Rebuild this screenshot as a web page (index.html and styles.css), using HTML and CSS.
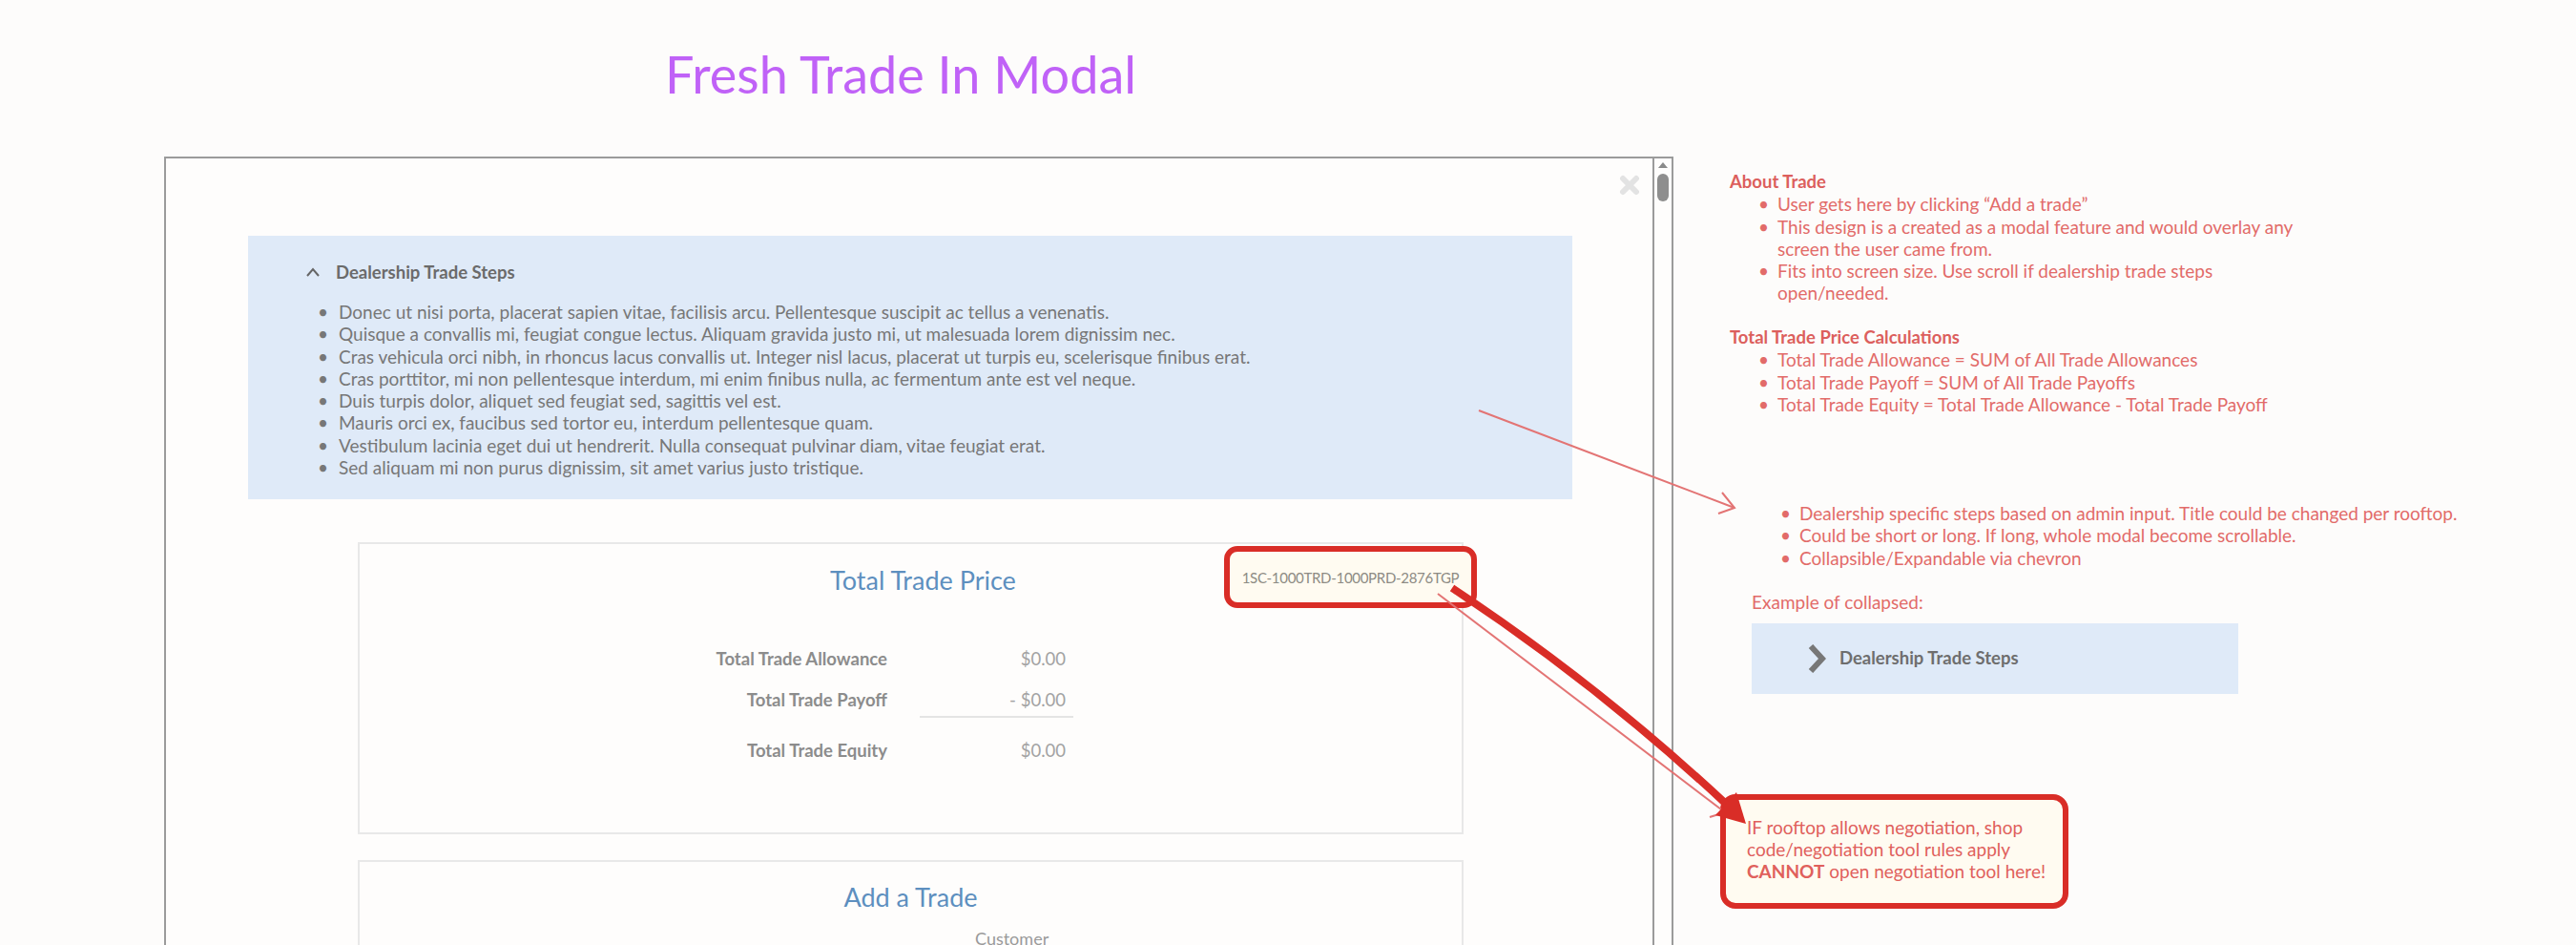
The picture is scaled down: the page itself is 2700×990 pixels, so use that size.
FILE: index.html
```html
<!DOCTYPE html>
<html lang="en">
<head>
    <meta charset="UTF-8">
    <meta name="viewport" content="width=device-width, initial-scale=1.0">
    <title>Fresh Trade In Modal</title>
    <link rel="stylesheet" href="styles.css">
</head>
<body>
    <div class="board">
        <div class="screen">
            <h1 class="board-title">Fresh Trade In Modal</h1>

            <div class="modal">
                <svg class="close" width="22" height="22" viewBox="0 0 22 22">
                    <path d="M4 4 L18 18 M18 4 L4 18" stroke="#e3e3e3" stroke-width="6" stroke-linecap="round"/>
                </svg>

                <div class="modal-body">
                    <div class="steps">
                        <div class="steps-head">
                            <svg width="16" height="10" viewBox="0 0 16 10">
                                <path d="M2 9 L8 2 L14 9" fill="none" stroke="#666" stroke-width="2"/>
                            </svg>
                            <span>Dealership Trade Steps</span>
                        </div>
                        <ul class="steps-list">
                            <li>Donec ut nisi porta, placerat sapien vitae, facilisis arcu. Pellentesque suscipit ac tellus a venenatis.</li>
                            <li>Quisque a convallis mi, feugiat congue lectus. Aliquam gravida justo mi, ut malesuada lorem dignissim nec.</li>
                            <li>Cras vehicula orci nibh, in rhoncus lacus convallis ut. Integer nisl lacus, placerat ut turpis eu, scelerisque finibus erat.</li>
                            <li>Cras porttitor, mi non pellentesque interdum, mi enim finibus nulla, ac fermentum ante est vel neque.</li>
                            <li>Duis turpis dolor, aliquet sed feugiat sed, sagittis vel est.</li>
                            <li>Mauris orci ex, faucibus sed tortor eu, interdum pellentesque quam.</li>
                            <li>Vestibulum lacinia eget dui ut hendrerit. Nulla consequat pulvinar diam, vitae feugiat erat.</li>
                            <li>Sed aliquam mi non purus dignissim, sit amet varius justo tristique.</li>
                        </ul>
                    </div>

                    <div class="card price-card">
                        <div class="code-tag">1SC-1000TRD-1000PRD-2876TGP</div>
                        <h2 class="card-title">Total Trade Price</h2>
                        <div class="totals">
                            <div class="total-label">Total Trade Allowance</div>
                            <div class="total-value">$0.00</div>
                            <div class="total-label">Total Trade Payoff</div>
                            <div class="total-value subtotal">- $0.00</div>
                            <div class="total-label equity">Total Trade Equity</div>
                            <div class="total-value equity">$0.00</div>
                        </div>
                    </div>

                    <div class="card add-card">
                        <h2 class="card-title">Add a Trade</h2>
                        <div class="field-label">Customer</div>
                    </div>
                </div>

                <div class="modal-scroll">
                    <span class="scroll-up"></span>
                    <span class="scroll-thumb"></span>
                </div>
            </div>
        </div>

        <div class="notes">
            <div class="note-block">
                <div class="note-title">About Trade</div>
                <ul class="note-list">
                    <li>User gets here by clicking “Add a trade”</li>
                    <li>This design is a created as a modal feature and would overlay any<br>screen the user came from.</li>
                    <li>Fits into screen size. Use scroll if dealership trade steps<br>open/needed.</li>
                </ul>

                <div class="note-title spaced">Total Trade Price Calculations</div>
                <ul class="note-list">
                    <li>Total Trade Allowance = SUM of All Trade Allowances</li>
                    <li>Total Trade Payoff = SUM of All Trade Payoffs</li>
                    <li>Total Trade Equity = Total Trade Allowance - Total Trade Payoff</li>
                </ul>
            </div>

            <ul class="note-list steps-notes">
                <li>Dealership specific steps based on admin input. Title could be changed per rooftop.</li>
                <li>Could be short or long. If long, whole modal become scrollable.</li>
                <li>Collapsible/Expandable via chevron</li>
            </ul>

            <div class="collapsed-label">Example of collapsed:</div>
            <div class="collapsed">
                <svg width="19" height="30" viewBox="0 0 19 30">
                    <path d="M3 2 L15 15 L3 28" fill="none" stroke="#777" stroke-width="6"/>
                </svg>
                <span>Dealership Trade Steps</span>
            </div>

            <div class="callout">
                IF rooftop allows negotiation, shop<br>
                code/negotiation tool rules apply<br>
                <b>CANNOT</b> open negotiation tool here!
            </div>
        </div>
    </div>

    <!-- annotation arrows -->
    <svg class="arrows" width="2700" height="990" viewBox="0 0 2700 990">
        <g stroke="#e37474" stroke-width="2" fill="none">
            <path d="M1550 430 L1818 532"/>
            <path d="M1805 516 L1818 532 L1801 538"/>
            <path d="M1507 622 L1808 851"/>
            <path d="M1792 856 L1808 851"/>
        </g>
        <path d="M1522 616 Q1675 717 1810 843" stroke="#d92d27" stroke-width="8" fill="none"/>
        <path d="M1830 863 L1798 854 L1820 830 Z" fill="#d92d27"/>
    </svg>
</body>
</html>
```

FILE: styles.css
```css
* {
    margin: 0;
    padding: 0;
    box-sizing: border-box;
}

body {
    background: #fdfcfb;
    font-family: Lato, "Open Sans", sans-serif;
    width: 2700px;
    height: 990px;
    overflow: hidden;
    position: relative;
}

.board {
    display: flex;
    padding-left: 172px;
}

.screen {
    width: 1582px;
    flex-shrink: 0;
}

.board-title {
    height: 164px;
    padding: 46px 0 0 525px;
    font-size: 54px;
    line-height: 64px;
    font-weight: 400;
    color: #c062f7;
}

/* modal frame with its own scroll gutter */
.modal {
    position: relative;
    display: flex;
    height: 900px;
    border: 2px solid #9b9b9b;
    border-bottom: none;
    background: #fefdfc;
}

.close {
    position: absolute;
    top: 17px;
    right: 33px;
}

.modal-body {
    flex: 1;
    padding: 81px 84px 0 86px;
}

.modal-scroll {
    width: 20px;
    border-left: 2px solid #9b9b9b;
    display: flex;
    flex-direction: column;
    align-items: center;
    padding-top: 4px;
}

.scroll-up {
    width: 0;
    height: 0;
    border-left: 5px solid transparent;
    border-right: 5px solid transparent;
    border-bottom: 6px solid #8a8a8a;
}

.scroll-thumb {
    width: 12px;
    height: 29px;
    margin-top: 6px;
    border-radius: 6px;
    background: #8e8e8e;
}

/* dealership steps panel */
.steps {
    background: #dfeaf8;
    padding: 26px 40px 22px 60px;
}

.steps-head {
    display: flex;
    align-items: center;
    gap: 16px;
    font-size: 18.5px;
    line-height: 24px;
    font-weight: 700;
    color: #6b6b6b;
}

.steps-list {
    list-style: none;
    margin-top: 18px;
    padding-left: 13px;
    font-size: 19px;
    line-height: 23.3px;
    color: #777;
}

.steps-list li {
    display: flex;
}

.steps-list li::before {
    content: "•";
    width: 22px;
    flex-shrink: 0;
}

/* cards */
.card {
    border: 2px solid #e8e8e8;
    background: #fefdfc;
    margin: 0 114px 0 115px;
}

.card-title {
    text-align: center;
    font-size: 27px;
    line-height: 34px;
    font-weight: 400;
    color: #5d8fbf;
}

.price-card {
    position: relative;
    margin-top: 45px;
    padding: 21px 0 74px;
}

.price-card .card-title {
    text-indent: 26px;
}

.code-tag {
    position: absolute;
    top: 2px;
    right: -16px;
    width: 265px;
    height: 65px;
    border: 6px solid #d92d27;
    border-radius: 14px;
    background: #fffbf1;
    display: flex;
    align-items: center;
    justify-content: center;
    font-size: 15px;
    letter-spacing: -0.3px;
    color: #8d8b84;
}

.totals {
    display: grid;
    grid-template-columns: 300px 161px;
    column-gap: 34px;
    row-gap: 19px;
    margin: 53px 0 0 253px;
    font-size: 18.5px;
    line-height: 24px;
}

.total-label {
    text-align: right;
    font-weight: 700;
    color: #8c8c8c;
}

.total-value {
    text-align: right;
    padding-right: 8px;
    color: #a3a3a3;
}

.total-value.subtotal {
    padding-bottom: 5px;
    border-bottom: 2px solid #e4e4e4;
}

.equity {
    margin-top: 3px;
}

.add-card {
    margin-top: 27px;
    height: 200px;
    padding-top: 20px;
}

.field-label {
    margin-top: 15px;
    padding-left: 645px;
    font-size: 18px;
    line-height: 22px;
    color: #9a9a9a;
}

/* side notes */
.notes {
    margin-left: 49px;
    padding-top: 179px;
    font-size: 19px;
    line-height: 23.3px;
    color: #e26b69;
}

.note-block {
    margin-left: 10px;
}

.note-title {
    font-size: 18.5px;
    font-weight: 700;
    color: #dc5f5d;
}

.note-title.spaced {
    margin-top: 23.3px;
}

.note-list {
    list-style: none;
    padding-left: 30px;
    white-space: nowrap;
}

.note-list li {
    display: flex;
}

.note-list li::before {
    content: "•";
    width: 20px;
    flex-shrink: 0;
}

.steps-notes {
    margin-top: 90.7px;
    padding-left: 63px;
}

.collapsed-label {
    margin: 23px 0 0 33px;
}

.collapsed {
    display: flex;
    align-items: center;
    gap: 14px;
    width: 510px;
    height: 74px;
    margin: 11px 0 0 33px;
    padding-left: 59px;
    background: #dfeaf8;
    font-size: 18.5px;
    font-weight: 700;
    color: #6e6e6e;
}

.callout {
    width: 365px;
    height: 120px;
    margin-top: 105px;
    padding: 17px 0 0 22px;
    border: 6px solid #d92d27;
    border-radius: 16px;
    background: #fffbf1;
    line-height: 23px;
    color: #e0605c;
}

.callout b {
    font-weight: 700;
}

.arrows {
    position: absolute;
    top: 0;
    left: 0;
    pointer-events: none;
}
```
